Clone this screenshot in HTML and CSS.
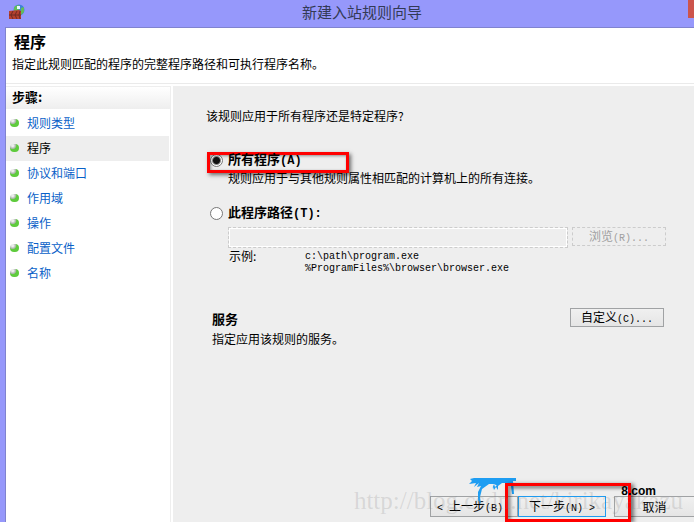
FILE: index.html
```
<!DOCTYPE html>
<html lang="zh-CN">
<head>
<meta charset="utf-8">
<title>新建入站规则向导</title>
<link rel="stylesheet" href="styles.css">
</head>
<body>
<div class="window">
  <header class="titlebar">
    <svg class="app-icon" viewBox="0 0 16 16" aria-hidden="true">
      <circle cx="10" cy="6" r="5.500" fill="#3f82d8"/>
      <path d="M6 2l4-1 1 3-2 3-4 0 0-3zM12 4l3-1 0 5-3 3z" fill="#62bd5a"/>
      <path d="M8 2h3v3H8z" fill="#e8f4ff"/>
      <path d="M0 7l10-1 2 1v8H0z" fill="#b5402f"/>
      <path d="M4 7l-2 4 2 4M8 7l-2 4 2 4M11 7l-1 4 1 4M0 11h12" stroke="#6e2a24" fill="none"/>
    </svg>
    <span class="caption">新建入站规则向导</span>
    <button class="close" aria-label="关闭"></button>
  </header>
  <div class="client">
    <section class="heading">
      <h1>程序</h1>
      <p>指定此规则匹配的程序的完整程序路径和可执行程序名称。</p>
    </section>
    <div class="columns">
      <nav class="steps">
        <h2>步骤:</h2>
        <ul>
          <li><a href="#">规则类型</a></li>
          <li class="current"><a href="#" aria-current="step">程序</a></li>
          <li><a href="#">协议和端口</a></li>
          <li><a href="#">作用域</a></li>
          <li><a href="#">操作</a></li>
          <li><a href="#">配置文件</a></li>
          <li><a href="#">名称</a></li>
        </ul>
      </nav>
      <main class="page">
        <form class="form">
          <p class="question">该规则应用于所有程序还是特定程序?</p>
          <div class="choice marked">
            <input type="radio" name="target" id="all" checked>
            <label for="all">所有程序<span class="key">(A)</span></label>
          </div>
          <p class="hint">规则应用于与其他规则属性相匹配的计算机上的所有连接。</p>
          <div class="choice">
            <input type="radio" name="target" id="path">
            <label for="path">此程序路径<span class="key">(T):</span></label>
          </div>
          <div class="path-row">
            <input class="path" type="text" aria-label="此程序路径" disabled>
            <button class="button" type="button" disabled>浏览<span class="latin">(R)...</span></button>
          </div>
          <div class="example">
            <span>示例:</span>
            <code>c:\path\program.exe<br>%ProgramFiles%\browser\browser.exe</code>
          </div>
          <div class="service">
            <div>
              <h3>服务</h3>
              <p>指定应用该规则的服务。</p>
            </div>
            <button class="button" type="button">自定义<span class="latin">(C)...</span></button>
          </div>
        </form>
        <footer class="footer">
          <svg class="mascot" viewBox="0 0 48 28" aria-hidden="true">
            <path d="M2 1l4-1h42v3l-3 0 1 13-2 0-1-8-4-3-5 0-4 3-4-2-5 0-7 5-2 8 1 7-3-4 0-8 3-6-4 1 2-4-5 4 2-4-7 1 3-3z" fill="#1e9df2"/>
            <path d="M24 11l2-5 1 3 3-3 0 6-2-3-2 3-1-3z" fill="#1e9df2"/>
          </svg>
          <button class="button back" type="button"><span class="latin">&lt; </span>上一步<span class="latin">(B)</span></button>
          <button class="button next" type="button">下一步<span class="latin">(N) &gt;</span></button>
          <button class="button cancel" type="button">取消</button>
          <span class="marker"></span>
          <span class="site">8.com</span>
          <span class="watermark">http://blog.csdn.net/kirikayakazu</span>
        </footer>
      </main>
    </div>
  </div>
</div>
</body>
</html>
```
FILE: styles.css
```
*, ::before, ::after { box-sizing: border-box; }
body {
  margin: 0;
  background: #9698fb;
  color: #000;
  font: 12px/16px "Noto Sans CJK SC", sans-serif;
}
h1, h2, h3, p, ul { margin: 0; padding: 0; }
.window {
  display: flex;
  flex-direction: column;
  height: 100vh;
  overflow: hidden;
  padding-left: 5px;
}
.titlebar {
  position: relative;
  display: flex;
  align-items: center;
  height: 27px;
  padding-left: 4px;
}
.app-icon { width: 16px; height: 16px; margin-bottom: 4px; }
.caption {
  flex: 1;
  padding-left: 5px;
  padding-bottom: 3px;
  text-align: center;
  font-size: 15px;
  line-height: 24px;
  color: #333a55;
}
.close {
  position: absolute;
  top: 0;
  right: 0;
  width: 6px;
  height: 18px;
  padding: 0;
  border: 0;
  background: #cc544c;
}
.client {
  display: flex;
  flex: 1;
  flex-direction: column;
  min-height: 0;
  border: solid #8083cf;
  border-width: 1px 0 0 1px;
  background: #fff;
}
.heading {
  height: 56px;
  padding: 3px 6px;
  border-bottom: 1px solid #eaeaea;
}
.heading h1 { padding-left: 2px; font-size: 16px; line-height: 20px; }
.heading p { padding-top: 5px; }
.columns {
  display: flex;
  flex: 1;
  gap: 2px;
  min-height: 0;
  padding-top: 2px;
}
.steps {
  flex: 0 0 165px;
  border: solid #eee;
  border-width: 1px 1px 0 0;
}
.steps h2 {
  height: 22px;
  padding-left: 6px;
  background: linear-gradient(#fff, #eee);
  font-size: 13px;
  line-height: 20px;
}
.steps ul { padding: 2px 1px 0 0; list-style: none; }
.steps li {
  display: flex;
  align-items: center;
  gap: 8px;
  height: 25px;
  padding: 0 0 2px 4px;
}
.steps li::before {
  content: "";
  width: 9px;
  height: 8px;
  border-radius: 4px;
  background: radial-gradient(circle at 30% 20%, #eee 1px, #a9b5a9 3px, #5fcb3d 4px);
}
.steps a { color: #0961c8; text-decoration: none; }
.steps .current { background: #eee; }
.steps .current a { color: #000; }
.page {
  display: flex;
  flex: 1;
  flex-direction: column;
  justify-content: space-between;
  background: #eee;
}
.form { padding: 22px 28px 0 33px; }
.choice {
  position: relative;
  display: flex;
  align-items: center;
  gap: 5px;
  height: 20px;
  padding-left: 4px;
  font-size: 13px;
  font-weight: bold;
}
.choice input {
  appearance: none;
  width: 13px;
  height: 13px;
  margin: 0;
  border: 1px solid #777;
  border-radius: 50%;
  background: #fff;
}
.choice input:checked { background: radial-gradient(#111 3px, #fff 5px); }
.choice .key { font: bold 12px/16px "Liberation Mono", monospace; }
.choice label { position: relative; z-index: 1; }
.marked { margin-top: 26px; }
.marked::after {
  content: "";
  position: absolute;
  top: 2px;
  left: 1px;
  width: 142px;
  height: 21px;
  border: 3px solid #f00;
  box-shadow: 2px 2px 4px rgb(0 0 0 / 55%), inset 1px 1px 3px rgb(0 0 0 / 40%);
  pointer-events: none;
}
.hint { padding: 0 0 17px 22px; }
.path-row { display: flex; gap: 4px; padding: 4px 0 0 22px; }
.path {
  flex: 1;
  min-width: 0;
  height: 21px;
  border: 1px dashed #ccc;
  background: #eee;
  box-shadow: inset 0 0 0 1px #fff;
}
.button {
  width: 94px;
  height: 19px;
  padding: 0;
  border: 1px solid #a0a2a4;
  background: linear-gradient(#f0f0f0, #e5e5e5);
  color: #000;
  font: inherit;
  line-height: 16px;
}
.button:disabled { border: 1px dashed #ccc; background: #eee; color: #a0a0a0; }
.latin, code { font: 10px/12px "Liberation Mono", monospace; }
.latin { white-space: pre; }
.example { display: flex; padding-left: 23px; }
.example span { width: 76px; }
.example code { padding-top: 3px; }
.service {
  display: flex;
  align-items: flex-start;
  justify-content: space-between;
  padding: 33px 2px 0 6px;
}
.service h3 { padding-top: 3px; font-size: 13px; line-height: 16px; }
.service p { padding-top: 4px; }
.footer {
  position: relative;
  display: flex;
  justify-content: flex-end;
  height: 44px;
  overflow: hidden;
  padding-top: 18px;
}
.footer .button { flex: none; height: 21px; }
.footer .back { width: 88px; padding-right: 8px; }
.footer .next { width: 88px; border-color: #1e9bf0; }
.footer .cancel { width: 80px; margin-left: 8px; border-right: 0; }
.mascot { position: absolute; top: 0; right: 178px; width: 48px; height: 28px; }
.marker {
  position: absolute;
  right: 63px;
  bottom: 0;
  width: 126px;
  height: 39px;
  border: 3px solid #f00;
  box-shadow: 3px 1px 4px rgb(0 0 0 / 50%), inset 3px 3px 3px rgb(0 0 0 / 35%);
  pointer-events: none;
}
.site {
  position: absolute;
  top: 5px;
  right: 38px;
  font: bold 12px/16px "Liberation Sans", sans-serif;
}
.watermark {
  position: absolute;
  top: 11px;
  right: 11px;
  color: rgb(120 120 120 / 20%);
  font: 25px/24px "Liberation Serif", serif;
  pointer-events: none;
}
```
